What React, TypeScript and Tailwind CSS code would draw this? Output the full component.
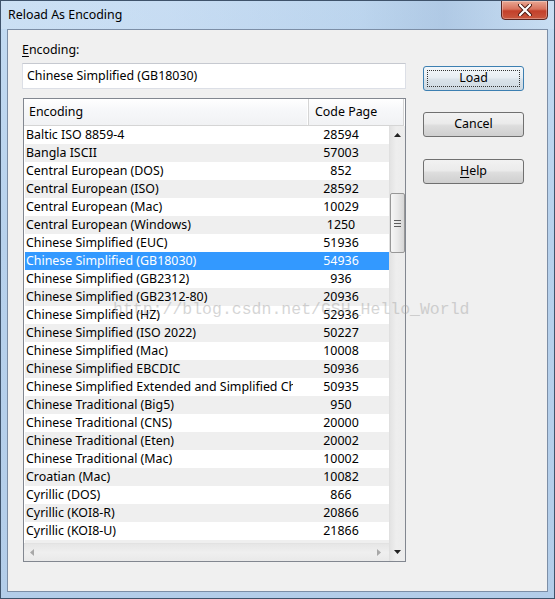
import { Fragment } from "react";

type Row = { name: string; code: string };

const rows: Row[] = [
  { name: "Baltic ISO 8859-4", code: "28594" },
  { name: "Bangla ISCII", code: "57003" },
  { name: "Central European (DOS)", code: "852" },
  { name: "Central European (ISO)", code: "28592" },
  { name: "Central European (Mac)", code: "10029" },
  { name: "Central European (Windows)", code: "1250" },
  { name: "Chinese Simplified (EUC)", code: "51936" },
  { name: "Chinese Simplified (GB18030)", code: "54936" },
  { name: "Chinese Simplified (GB2312)", code: "936" },
  { name: "Chinese Simplified (GB2312-80)", code: "20936" },
  { name: "Chinese Simplified (HZ)", code: "52936" },
  { name: "Chinese Simplified (ISO 2022)", code: "50227" },
  { name: "Chinese Simplified (Mac)", code: "10008" },
  { name: "Chinese Simplified EBCDIC", code: "50936" },
  { name: "Chinese Simplified Extended and Simplified Chinese", code: "50935" },
  { name: "Chinese Traditional (Big5)", code: "950" },
  { name: "Chinese Traditional (CNS)", code: "20000" },
  { name: "Chinese Traditional (Eten)", code: "20002" },
  { name: "Chinese Traditional (Mac)", code: "10002" },
  { name: "Croatian (Mac)", code: "10082" },
  { name: "Cyrillic (DOS)", code: "866" },
  { name: "Cyrillic (KOI8-R)", code: "20866" },
  { name: "Cyrillic (KOI8-U)", code: "21866" },
  { name: "Cyrillic (Mac)", code: "10007" },
];

const SELECTED = 7;

function Button({ children, primary = false }: { children: React.ReactNode; primary?: boolean }) {
  return (
    <div
      className={`relative w-[101px] h-[25px] rounded-[3px] border flex items-center justify-center text-black ${
        primary
          ? "border-[#3c7fb1] bg-[linear-gradient(#f3f7fa_0%,#e8eef3_45%,#d9e2e9_55%,#cdd8e1_100%)]"
          : "border-[#707070] bg-[linear-gradient(#f2f2f2_0%,#ebebeb_45%,#dddddd_55%,#cfcfcf_100%)]"
      }`}
    >
      {primary && (
        <div className="absolute inset-[3px] border border-dotted border-[#333]" />
      )}
      <span className="relative">{children}</span>
    </div>
  );
}

function Triangle({ dir, color }: { dir: "up" | "down" | "left" | "right"; color: string }) {
  const pts = {
    up: "0,4 7,4 3.5,0",
    down: "0,0 7,0 3.5,4",
    left: "4,0 4,7 0,3.5",
    right: "0,0 0,7 4,3.5",
  }[dir];
  const w = dir === "up" || dir === "down" ? 7 : 4;
  const h = dir === "up" || dir === "down" ? 4 : 7;
  return (
    <svg width={w} height={h} viewBox={`0 0 ${w} ${h}`}>
      <polygon points={pts} fill={color} />
    </svg>
  );
}

export default function App() {
  return (
    <div className="relative w-[555px] h-[599px] overflow-hidden border border-[#3f536b] bg-[linear-gradient(180deg,#c3dbf2_0%,#b7d1ec_40%,#b3cde9_100%)] font-['Noto_Sans','Liberation_Sans',sans-serif] text-[12.4px] text-black">
      {/* Title bar */}
      <div className="h-[28px] flex items-center pl-[7px] bg-[linear-gradient(90deg,rgba(255,255,255,0.15)_0%,rgba(210,225,245,0.3)_30%,rgba(150,180,215,0.15)_65%,rgba(120,150,190,0.25)_80%,rgba(255,255,255,0.1)_100%)]">
        <span className="text-[12.4px] leading-none">Reload As Encoding</span>
      </div>

      {/* Close button */}
      <div className="absolute top-[-1px] right-[6px] w-[47px] h-[20px] rounded-b-[4px] border border-[#5a2520] bg-[linear-gradient(180deg,#e9a793_0%,#d8735d_45%,#c3402a_55%,#c9583f_100%)] flex items-center justify-center shadow-[inset_0_0_0_1px_rgba(255,255,255,0.3)]">
        <svg width="14" height="12" viewBox="0 0 14 12">
          <path d="M2 1 L12 11 M12 1 L2 11" stroke="#4a1a12" strokeWidth="4" strokeLinecap="round" />
          <path d="M2 1 L12 11 M12 1 L2 11" stroke="#ffffff" strokeWidth="2.2" strokeLinecap="round" />
        </svg>
      </div>

      {/* Client area */}
      <div className="mx-[6px] h-[563px] border border-[#7c8ea6] bg-[#f0f0f0] flex">
        <div className="ml-[14px] w-[384px] flex flex-col">
          <div className="mt-[12px] h-[16px] leading-[16px]">
            <span className="underline underline-offset-2">E</span>ncoding:
          </div>
          <div className="mt-[5px] h-[26px] bg-white border border-[#dcdfe6] border-t-[#c6c9d0] flex items-center pl-[4px]">
            Chinese Simplified (GB18030)
          </div>

          {/* List view */}
          <div className="mt-[9px] ml-[1px] w-[383px] h-[464px] border border-[#828790] bg-white flex flex-col">
            <div className="w-[380px] h-[27px] flex border-b border-[#d5d5d5] bg-[linear-gradient(#ffffff_0%,#f7f8fa_40%,#f1f2f4_100%)]">
              <div className="w-[285px] pl-[5px] flex items-center border-r border-[#d5d5d5] shadow-[inset_-1px_0_0_#ffffff]">
                Encoding
              </div>
              <div className="flex-1 pl-[6px] flex items-center border-r border-[#d5d5d5]">Code Page</div>
            </div>

            <div className="flex h-[435px]">
              <div className="w-[365px] flex flex-col">
                <div className="h-[417px] overflow-hidden pl-[1px]">
                  {rows.map((r, i) => (
                    <Fragment key={r.name}>
                      <div
                        className={`flex h-[18px] items-center ${
                          i === SELECTED
                            ? "bg-[#3399ff] text-white"
                            : i % 2 === 1
                            ? "bg-[#efefef]"
                            : "bg-white"
                        }`}
                      >
                        <div className="w-[284px] pl-[1px] overflow-hidden whitespace-nowrap">{r.name}</div>
                        <div className="w-[96px] shrink-0 text-center">{r.code}</div>
                      </div>
                    </Fragment>
                  ))}
                </div>
                {/* Horizontal scrollbar */}
                <div className="h-[18px] bg-[linear-gradient(#e6e6e6,#efefef_50%,#e9e9e9)] border-t border-[#e2e2e2] flex items-center justify-between pl-[6px] pr-[8px]">
                  <Triangle dir="left" color="#a8a8a8" />
                  <Triangle dir="right" color="#a8a8a8" />
                </div>
              </div>

              {/* Vertical scrollbar */}
              <div className="w-[16px] flex flex-col items-center bg-[linear-gradient(90deg,#e3e3e3,#eeeeee_40%,#ececec)] border-l border-[#e0e0e0]">
                <div className="h-[17px] flex items-center justify-center">
                  <Triangle dir="up" color="#222" />
                </div>
                <div className="mt-[50px] w-[15px] h-[60px] rounded-[2px] border border-[#979797] bg-[linear-gradient(90deg,#f6f6f6,#e9e9e9_50%,#d6d6d6)] flex flex-col items-center justify-center gap-[2px]">
                  <div className="w-[7px] h-[1px] bg-[#5e5e5e]" />
                  <div className="w-[7px] h-[1px] bg-[#5e5e5e]" />
                  <div className="w-[7px] h-[1px] bg-[#5e5e5e]" />
                </div>
                <div className="flex-1" />
                <div className="h-[18px] flex items-center justify-center">
                  <Triangle dir="down" color="#222" />
                </div>
              </div>
            </div>
          </div>
        </div>

        {/* Buttons */}
        <div className="ml-[17px] flex flex-col">
          <div className="mt-[36px]">
            <Button primary>Load</Button>
          </div>
          <div className="mt-[21px]">
            <Button>Cancel</Button>
          </div>
          <div className="mt-[22px]">
            <Button>
              <span className="underline underline-offset-2">H</span>elp
            </Button>
          </div>
        </div>
      </div>

      {/* Watermark */}
      <div className="pointer-events-none absolute left-[112px] top-[299px] leading-[20px] text-[16.5px] font-['Liberation_Mono',monospace] text-[#9a9a9a] opacity-40 whitespace-nowrap">
        http://blog.csdn.net/GSH_Hello_World
      </div>
    </div>
  );
}
